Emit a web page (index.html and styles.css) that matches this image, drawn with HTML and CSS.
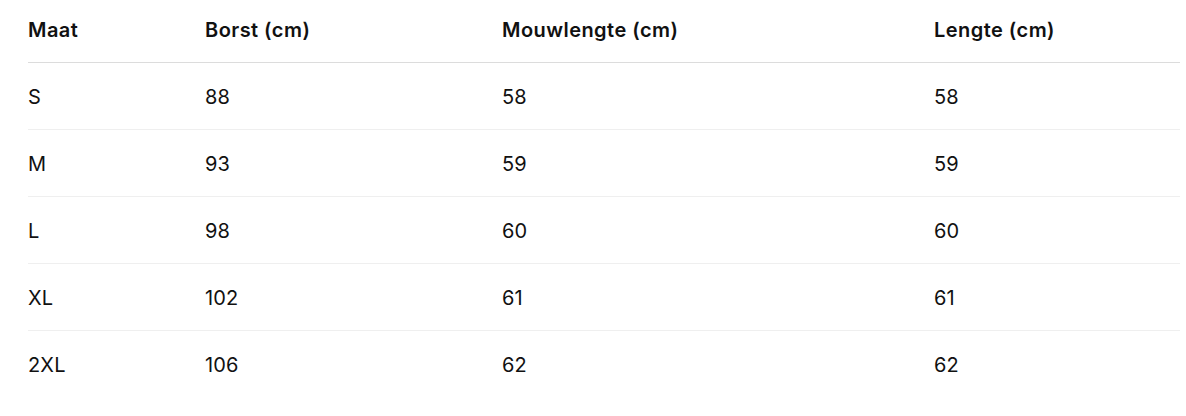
FILE: index.html
```html
<!DOCTYPE html>
<html lang="nl">
<head>
<meta charset="utf-8">
<title>Maattabel</title>
<link rel="stylesheet" href="styles.css">
</head>
<body>
<div class="wrap">
<table class="size-table">
<colgroup>
<col class="c1"><col class="c2"><col class="c3"><col class="c4">
</colgroup>
<thead>
<tr><th>Maat</th><th>Borst (cm)</th><th>Mouwlengte (cm)</th><th>Lengte (cm)</th></tr>
</thead>
<tbody>
<tr><td>S</td><td>88</td><td>58</td><td>58</td></tr>
<tr><td>M</td><td>93</td><td>59</td><td>59</td></tr>
<tr><td>L</td><td>98</td><td>60</td><td>60</td></tr>
<tr><td>XL</td><td>102</td><td>61</td><td>61</td></tr>
<tr><td>2XL</td><td>106</td><td>62</td><td>62</td></tr>
</tbody>
</table>
</div>
</body>
</html>
```
FILE: styles.css
```css
html, body {
  margin: 0;
  padding: 0;
  background: #fff;
}
body {
  font-family: Inter, "Noto Sans", sans-serif;
  color: #111;
}
.wrap {
  padding: 0 6px 0 28px;
}
.size-table {
  width: 1152px;
  border-collapse: collapse;
  table-layout: fixed;
}
.c1 { width: 177px; }
.c2 { width: 297px; }
.c3 { width: 432px; }
.c4 { width: 246px; }
.size-table th {
  text-align: left;
  font-weight: 600;
  font-size: 20px;
  letter-spacing: 0.45px;
  height: 62px;
  padding: 0 0 2px;
  box-sizing: border-box;
  vertical-align: middle;
  border-bottom: 1px solid #dcdcdc;
}
.size-table td {
  font-size: 20px;
  font-weight: 400;
  letter-spacing: 0.15px;
  height: 67px;
  padding: 3px 0 0;
  box-sizing: border-box;
  vertical-align: middle;
  border-bottom: 1px solid #efefef;
}
.size-table tbody tr:last-child td {
  border-bottom: none;
}
```
